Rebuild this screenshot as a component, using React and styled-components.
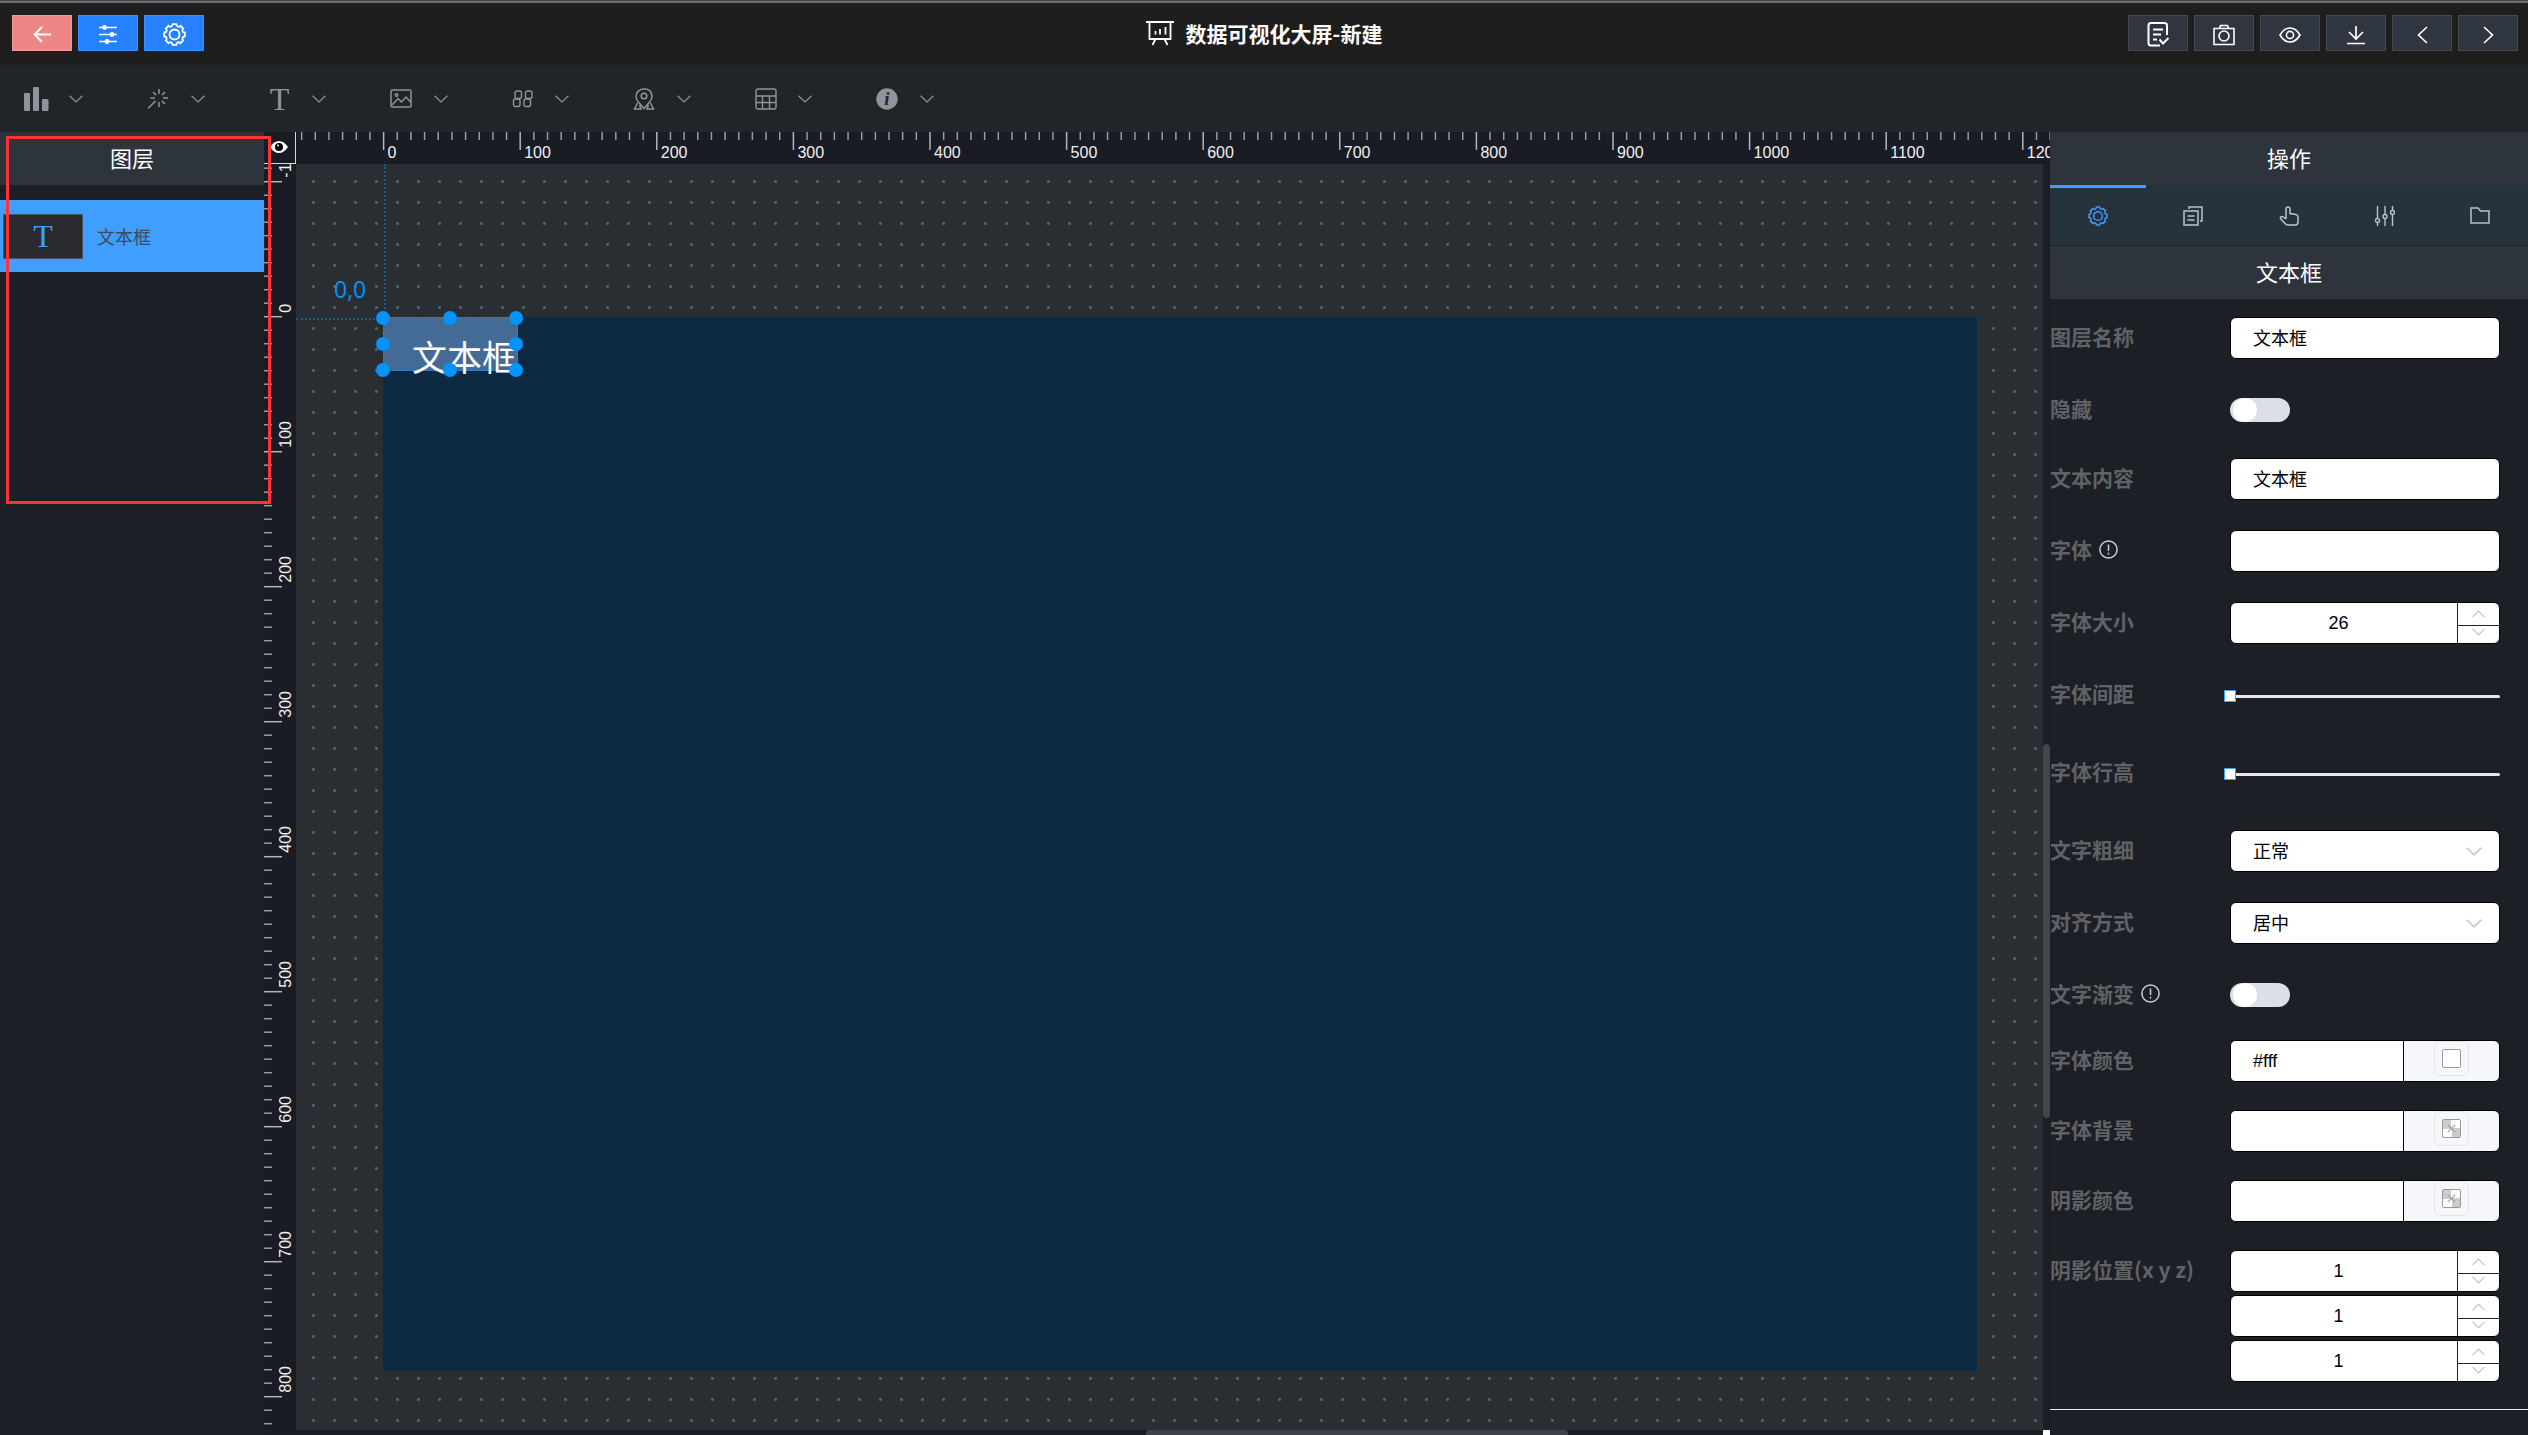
import React, { useState } from 'react';
import styled, { createGlobalStyle } from 'styled-components';

const GlobalStyle = createGlobalStyle`
  * {
    box-sizing: border-box;
  }

  body {
    margin: 0;
    background: #1e1e1f;
    color: #fff;
    font-family: 'Noto Sans CJK SC', sans-serif;
    font-size: 18px;
  }

  button, input, select {
    margin: 0;
    padding: 0;
    font: inherit;
  }
`;

const cjk = "'Noto Sans CJK SC', sans-serif";
const arial = "'Liberation Sans', 'Noto Sans CJK SC', sans-serif";

const Page = styled.div`
  display: flex;
  flex-direction: column;
  height: 100vh;
  border-top: 1px solid #48474a;
  overflow: hidden;
`;

const Header = styled.header`
  display: grid;
  grid-template-columns: 1fr auto 1fr;
  flex: none;
  height: 64px;
  padding: 12px 12px 0 12px;
  border-top: 2px solid #706e70;
  background: #1e1e1f;
`;

const HeaderGroup = styled.div`
  display: flex;
  gap: 6px;
  height: 36px;
  margin-right: ${props => props.$end ? '-2px' : '0'};
  justify-content: ${props => props.$end ? 'flex-end' : 'flex-start'};
`;

const HeaderButton = styled.button`
  display: flex;
  align-items: center;
  justify-content: center;
  width: 60px;
  height: 36px;
  padding-top: 3px;
  color: #fff;
  background: ${props => props.$bg || '#303640'};
  border: 1px solid ${props => props.$border || '#454850'};
  cursor: pointer;
`;

const PageTitle = styled.h1`
  display: flex;
  align-items: center;
  gap: 12px;
  height: 36px;
  margin: 0;
  font-size: 21px;
  font-weight: 700;
  line-height: 36px;
`;

const Toolbar = styled.nav`
  display: flex;
  flex: none;
  height: 67px;
  background: #222528;
`;

const ToolList = styled.div`
  display: grid;
  grid-template-columns: repeat(8, 1fr);
  width: 972px;
`;

const ToolButton = styled.button`
  display: flex;
  align-items: center;
  gap: 20px;
  padding: 0 0 0 24px;
  color: #909399;
  background: none;
  border: none;
  cursor: pointer;
`;

const ToolIcon = styled.span`
  display: flex;
  align-items: center;
  justify-content: center;
  width: 25px;
  height: 26px;
`;

const SerifT = styled.span`
  font-family: 'Liberation Serif', serif;
  font-size: 32px;
  line-height: 32px;
`;

const Body = styled.div`
  position: relative;
  display: flex;
  flex: 1;
  min-height: 0;
  background: #1d1f27;
`;

const LayerPanel = styled.aside`
  flex: none;
  width: 264px;
`;

const PanelTitle = styled.h2`
  flex: none;
  height: 53px;
  margin: 0;
  background: #2d343c;
  font-size: 22px;
  font-weight: 400;
  line-height: 50px;
  text-align: center;
`;

const LayerItem = styled.button`
  display: flex;
  align-items: center;
  gap: 14px;
  width: 100%;
  height: 72px;
  margin-top: 15px;
  padding: 0 3px;
  color: #3b4a5c;
  background: #409eff;
  border: none;
  font-size: 18px;
  cursor: pointer;
`;

const LayerThumb = styled.span`
  display: flex;
  align-items: center;
  justify-content: center;
  width: 80px;
  height: 45px;
  background: #282a30;
  border: 1px solid #46566a;
  color: #409eff;
`;

const Highlight = styled.div`
  position: absolute;
  z-index: 5;
  top: 4px;
  left: 6px;
  width: 265px;
  height: 368px;
  border: 3px solid #ff3334;
  pointer-events: none;
`;

const Workspace = styled.main`
  display: grid;
  grid-template-columns: 32px minmax(0, 1fr);
  grid-template-rows: 32px minmax(0, 1fr) 5px;
  flex: 1;
  min-width: 0;
  background: #191b25;
`;

const RulerCorner = styled.button`
  display: flex;
  align-items: center;
  justify-content: center;
  padding: 0 1px 2px 0;
  background: #191b25;
  border: none;
  border-right: 1px solid #d8d8d8;
  border-bottom: 1px solid #d8d8d8;
`;

const RulerBox = styled.div`
  overflow: hidden;
  background: #191b25;

  svg {
    display: block;
  }

  text {
    font-family: ${arial};
    font-size: 16px;
    fill: #f0f0f0;
  }
`;

const StageRow = styled.div`
  display: grid;
  grid-template-columns: minmax(0, 1fr) 7px;
  min-height: 0;
`;

const Stage = styled.div`
  position: relative;
  overflow: hidden;
  background-color: #2a2d31;
  background-image: radial-gradient(circle at 50% 50%, #596a6e 0, #4e5b5f 1px, #475256 1.5px, transparent 2px);
  background-size: 21px 21px;
  background-position: 7px 7px;
`;

const ScrollTrack = styled.div`
  background: #1c1e26;
`;

const ScrollThumbY = styled.div`
  height: 374px;
  margin-top: 580px;
  border-radius: 4px;
  background: #42454d;
`;

const BottomTrack = styled.div`
  display: flex;
  justify-content: space-between;
  grid-column: 1 / -1;
  padding-left: 882px;
  background: #1c1d25;
`;

const ScrollThumbX = styled.div`
  width: 422px;
  border-radius: 4px 4px 0 0;
  background: #40424b;
`;

const ScrollCorner = styled.div`
  width: 7px;
  background: #fff;
`;

const Artboard = styled.div`
  position: absolute;
  top: 153px;
  left: 87px;
  width: 1594px;
  height: 1054px;
  background: #0e2a42;
`;

const GuideX = styled.div`
  position: absolute;
  top: 154px;
  left: 0;
  width: 87px;
  border-top: 2px dotted #1d5a88;
`;

const GuideY = styled.div`
  position: absolute;
  top: 0;
  left: 88px;
  height: 153px;
  border-left: 2px dotted #1d5a88;
`;

const Coords = styled.div`
  position: absolute;
  top: 110px;
  left: 38px;
  color: #0094ff;
  font-family: 'Open Sans', sans-serif;
  font-size: 23px;
  line-height: 30px;
`;

const Selection = styled.div`
  position: absolute;
  top: 0;
  left: 0;
  width: 135px;
  height: 54px;
  padding-left: 28px;
  background: #436b96;
  border: 1px dashed #1a86dc;
  font-size: 35px;
  line-height: 76px;
  white-space: nowrap;
`;

const Handle = styled.i`
  position: absolute;
  top: ${props => props.$top};
  left: ${props => props.$left};
  width: 14px;
  height: 14px;
  margin: -7px 0 0 -8px;
  border-radius: 50%;
  background: #0094ff;
`;

const SidePanel = styled.aside`
  display: flex;
  flex-direction: column;
  flex: none;
  width: 478px;
  background: #1d1f27;
  overflow: hidden;
`;

const TabBar = styled.div`
  display: grid;
  grid-template-columns: repeat(5, 1fr);
  flex: none;
  height: 60px;
  margin-bottom: 1px;
  background: #27333c;
`;

const Tab = styled.button`
  display: flex;
  align-items: center;
  justify-content: center;
  padding-bottom: 2px;
  color: ${props => props.$active ? '#409eff' : '#b4c4d0'};
  background: none;
  border: none;
  border-top: 3px solid ${props => props.$active ? '#409eff' : 'transparent'};
  cursor: pointer;
`;

const Form = styled.form`
  display: flex;
  flex-direction: column;
  padding: 18px 28px 0 0;
`;

const rowHeights = { switch: 69, group: 66, slider: 78, color: 70 };

const Row = styled.div`
  display: grid;
  grid-template-columns: 180px minmax(0, 1fr);
  align-items: start;
  min-height: ${props => rowHeights[props.$kind] || 72}px;
`;

const Label = styled.label`
  display: flex;
  align-items: center;
  gap: 7px;
  height: 38px;
  color: #606266;
  font-size: 21px;
  font-weight: 700;
  line-height: 38px;
  white-space: nowrap;

  svg {
    color: #c2d3dd;
  }
`;

const TextInput = styled.input`
  width: 100%;
  height: 42px;
  padding: 0 22px 2px;
  color: #000;
  background: #fff;
  border: 1px solid #000;
  border-radius: 6px;
  font-family: ${arial};
  font-size: 18px;
`;

const NumberBox = styled.div`
  display: grid;
  grid-template-columns: minmax(0, 1fr) 42px;
  height: 42px;
  background: #fff;
  border: 1px solid #000;
  border-radius: 6px;
  overflow: hidden;
`;

const NumberInput = styled.input`
  width: 100%;
  padding: 0 26px 0 15px;
  color: #000;
  background: none;
  border: none;
  font-family: ${arial};
  font-size: 18px;
  text-align: center;
  appearance: textfield;

  &::-webkit-inner-spin-button {
    appearance: none;
    margin: 0;
  }
`;

const Steppers = styled.div`
  display: grid;
  grid-template-rows: 23px 17px;
  border-left: 1px solid #222;
`;

const Stepper = styled.button`
  display: flex;
  align-items: center;
  justify-content: center;
  color: #c0c8d0;
  background: none;
  border: none;
  cursor: pointer;

  &:first-child {
    border-bottom: 1px solid #222;
  }

  &:last-child {
    padding-bottom: 6px;
  }
`;

const NumberStack = styled.div`
  display: grid;
  gap: 3px;
`;

const Switch = styled.input`
  appearance: none;
  width: 60px;
  height: 24px;
  margin-top: 9px;
  border-radius: 12px;
  background: ${props => props.checked ? '#409eff' : '#dcdfe6'};
  cursor: pointer;

  &::before {
    content: '';
    display: block;
    width: 24px;
    height: 24px;
    margin-left: ${props => props.checked ? '33px' : '3px'};
    border-radius: 50%;
    background: #fff;
  }
`;

const Slider = styled.input`
  appearance: none;
  width: calc(100% + 6px);
  height: 12px;
  margin: 16px 0 0 -6px;
  background: none;

  &::-webkit-slider-runnable-track {
    height: 3px;
    background: #e4e7ed;
    border-radius: 2px;
  }

  &::-webkit-slider-thumb {
    appearance: none;
    width: 12px;
    height: 12px;
    margin-top: -5px;
    background: #fff;
    border: 1px solid #409eff;
  }
`;

const SelectBox = styled.div`
  display: grid;
  align-items: center;
  color: #c0c4cc;

  > * {
    grid-area: 1 / 1;
  }

  svg {
    justify-self: end;
    margin-right: 18px;
    pointer-events: none;
  }
`;

const Select = styled.select`
  appearance: none;
  width: 100%;
  height: 42px;
  padding: 0 22px 2px;
  color: #000;
  background: #fff;
  border: 1px solid #000;
  border-radius: 6px;
  font-family: ${cjk};
  font-size: 18px;
`;

const ColorBox = styled.div`
  display: grid;
  grid-template-columns: minmax(0, 1fr) 95px;
  height: 42px;
  background: #f5f7fa;
  border: 1px solid #000;
  border-radius: 6px;
  overflow: hidden;
`;

const ColorInput = styled.input`
  width: 100%;
  padding: 0 22px;
  color: #000;
  background: #fff;
  border: none;
  border-right: 1px solid #000;
  font-family: ${arial};
  font-size: 18px;
`;

const SwatchButton = styled.button`
  display: flex;
  align-items: center;
  justify-content: center;
  justify-self: center;
  width: 35px;
  height: 35px;
  background: none;
  border: 1px solid #e6e6e6;
  border-radius: 6px;
  cursor: pointer;
`;

const Swatch = styled.span`
  display: flex;
  align-items: center;
  justify-content: center;
  width: 19px;
  height: 19px;
  color: #999;
  border: 1px solid #999;
  border-radius: 2px;
  background: ${props => props.$empty
    ? 'conic-gradient(#fff 25%, #ccc 0 50%, #fff 0 75%, #ccc 0)'
    : '#fff'};
`;

const Divider = styled.hr`
  width: 100%;
  flex: none;
  margin: 27px 0 0;
  border: none;
  border-top: 1px solid #e8eaef;
`;

const Svg = ({ size = 22, width, height, box = '0 0 24 24', stroke = 1.8, children }) => (
  <svg
    width={width || size}
    height={height || size}
    viewBox={box}
    fill="none"
    stroke="currentColor"
    strokeWidth={stroke}
    aria-hidden="true"
  >
    {children}
  </svg>
);

// eight rounded teeth round a centre of 12,12
const gearPath = (() => {
  const parts = [];
  const at = (angle, r) => {
    const a = (angle * Math.PI) / 180;
    return `${(12 + r * Math.cos(a)).toFixed(2)} ${(12 + r * Math.sin(a)).toFixed(2)}`;
  };
  for (let i = 0; i < 8; i++) {
    const a = i * 45;
    parts.push(`${i ? 'L' : 'M'}${at(a - 11, 11)}L${at(a + 11, 11)}`);
    parts.push(`Q${at(a + 13, 9)} ${at(a + 22.5, 9)}Q${at(a + 32, 9)} ${at(a + 34, 11)}`);
  }
  return parts.join('') + 'Z';
})();

const GearIcon = ({ size, stroke }) => (
  <Svg size={size} stroke={stroke}>
    <path d={gearPath} strokeLinejoin="round" />
    <circle cx="12" cy="12" r="5.2" />
  </Svg>
);

const BackIcon = () => (
  <Svg width={18} height={17} box="0 0 18 17" stroke={1.8}>
    <path d="M18 8.5H1.5M9 1L1.5 8.5L9 16" />
  </Svg>
);

const OperationIcon = () => (
  <Svg width={20} height={19} box="0 0 20 19" stroke={1.6}>
    <path d="M1 2.5H19M1 9.5H19M1 16.5H19" />
    <g fill="currentColor" stroke="none">
      <circle cx="6.5" cy="2.5" r="2.4" />
      <circle cx="14" cy="9.5" r="2.4" />
      <circle cx="9" cy="16.5" r="2.4" />
    </g>
  </Svg>
);

const BoardIcon = () => (
  <Svg width={28} height={26} box="0 0 28 26" stroke={1.8}>
    <path d="M0 2H28M3.5 2V19H24.5V2M9.5 19L6.500 25M18.5 19L21.5 25M9.5 11V14.5M14 9V14.5M19.5 7V14.5" />
  </Svg>
);

const SaveIcon = () => (
  <Svg width={23} height={25} box="0 0 23 25" stroke={2}>
    <path d="M13 23.500H4Q1.500 23.500 1.500 21V3.500Q1.500 1 4 1H17.500Q20 1 20 3.500V13M6 7.500H16M6 12.500H14M6 17.500H10M12.500 17.500L16 21.500L21.500 16" />
  </Svg>
);

const CameraIcon = () => (
  <Svg width={22} height={22} box="0 0 22 22" stroke={1.6}>
    <path d="M1 4.5H21V20.5H1ZM6.5 4.5L7.5 1.5H14.5L15.5 4.5" />
    <circle cx="11" cy="12" r="5" />
  </Svg>
);

const EyeIcon = () => (
  <Svg width={22} height={18} box="0 0 22 18" stroke={1.6}>
    <path d="M1 9Q5 2 11 2T21 9Q17 16 11 16T1 9Z" />
    <circle cx="11" cy="9" r="3.6" />
  </Svg>
);

const DownloadIcon = () => (
  <Svg width={18} height={20} box="0 0 18 20" stroke={1.7}>
    <path d="M9 1V13.5M2 7L9 14L16 7M0 18.5H18" />
  </Svg>
);

const PrevIcon = () => (
  <Svg width={11} height={18} box="0 0 11 18" stroke={1.6}>
    <path d="M10 1L1.5 9L10 17" />
  </Svg>
);

const NextIcon = () => (
  <Svg width={11} height={18} box="0 0 11 18" stroke={1.6}>
    <path d="M1 1L9.5 9L1 17" />
  </Svg>
);

const ChevronDown = ({ width = 14, height = 8, stroke = 1.2 }) => (
  <Svg width={width} height={height} box="0 0 14 8" stroke={stroke}>
    <path d="M0.5 0.7L7 7L13.5 0.7" />
  </Svg>
);

const ChevronUp = () => (
  <Svg width={13} height={8} box="0 0 14 8" stroke={1.3}>
    <path d="M0.5 7.3L7 1L13.5 7.3" />
  </Svg>
);

const ChartIcon = () => (
  <Svg width={25} height={24} box="0 0 25 24">
    <g fill="currentColor" stroke="none">
      <rect x="0" y="6" width="6" height="18" rx="1" />
      <rect x="9" y="0" width="6" height="24" rx="1" />
      <rect x="18" y="12" width="6.5" height="12" rx="1" />
    </g>
  </Svg>
);

const WandIcon = () => (
  <Svg width={22} height={22} box="0 0 22 22" stroke={1.5}>
    <path d="M1 20.5L8.5 13M12 1V6M12 14V19M3.5 10H8M16 10H21M6 4L9 7M18 4L15 7M15 13L18 16" />
  </Svg>
);

const ImageIcon = () => (
  <Svg width={22} height={19} box="0 0 22 19" stroke={1.5}>
    <rect x="1" y="1" width="20" height="17" rx="1.5" />
    <path d="M2 16L8 9.5L11.5 13L16 8L20.5 13" />
    <circle cx="6.5" cy="6" r="1.3" />
  </Svg>
);

// two slanted seven-segment digits
const DigitsIcon = () => (
  <Svg width={22} height={18} box="0 0 22 18" stroke={1.4}>
    <g strokeLinejoin="round">
      <rect x="3" y="1" width="6.5" height="7.5" rx="2" />
      <rect x="1.500" y="9" width="6.500" height="7.500" rx="2" />
      <rect x="13.500" y="1" width="6.500" height="7.500" rx="2" />
      <rect x="12" y="9" width="6.500" height="7.500" rx="2" />
    </g>
  </Svg>
);

const MapIcon = () => (
  <Svg width={22} height={22} box="0 0 22 22" stroke={1.5}>
    <path d="M11 20.5L5 13.5Q3 11 3 8.5Q3.5 1.5 11 1T19 8.5Q19 11 17 13.5ZM4.5 15L1.5 21H8L6.5 17M17.5 15L20.5 21H14L15.5 17" />
    <circle cx="11" cy="8" r="2.8" />
  </Svg>
);

const TableIcon = () => (
  <Svg width={22} height={22} box="0 0 22 22" stroke={1.4}>
    <rect x="1" y="1" width="20" height="20" rx="2" />
    <path d="M1 8H21M1 14.5H21M7.5 8V21M14.5 8V21" />
  </Svg>
);

const InfoIcon = () => (
  <svg width="22" height="22" viewBox="0 0 22 22" aria-hidden="true">
    <circle cx="11" cy="11" r="10.7" fill="#909399" />
    <text x="11" y="17" textAnchor="middle" fill="#222528" fontFamily="Liberation Serif, serif" fontStyle="italic" fontWeight="700" fontSize="19">i</text>
  </svg>
);

const CornerEye = () => (
  <svg width="18" height="14" viewBox="0 0 18 14" aria-hidden="true">
    <path d="M0 7Q4 1 9 1T18 7Q14 13 9 13T0 7Z" fill="#fff" />
    <circle cx="9" cy="7" r="4" fill="#000" />
    <circle cx="8" cy="5.5" r="1" fill="#fff" />
  </svg>
);

const CopyIcon = () => (
  <Svg width={20} height={20} box="0 0 20 20" stroke={1.5}>
    <path d="M1 5H15V19H1ZM6 3V1H19V15H17M4.5 10H11.5M4.5 14H11.5" />
  </Svg>
);

const PointerIcon = () => (
  <Svg width={20} height={20} box="0 0 20 20" stroke={1.5}>
    <path d="M7 13V3Q7.2 1 9 1T11 3V7.5L17 8.5Q19 9 19 11V16Q19 19 16 19H9Q7 19 5.5 17L1.5 12.5Q1 11 2.500 10.5Q4 10.2 7 13" />
  </Svg>
);

const FaderIcon = () => (
  <Svg width={20} height={20} box="0 0 20 20" stroke={1.4}>
    <path d="M2.5 0V12M2.5 17V20M10 0V8M10 13V20M17.5 0V4M17.5 9V20" />
    <circle cx="2.5" cy="14.5" r="2" />
    <circle cx="10" cy="10.5" r="2" />
    <circle cx="17.5" cy="6.5" r="2" />
  </Svg>
);

const FolderIcon = () => (
  <Svg width={20} height={17} box="0 0 20 17" stroke={1.5}>
    <path d="M1 1H8L10.5 4H19V16H1Z" />
  </Svg>
);

const TipIcon = () => (
  <Svg width={19} height={19} box="0 0 19 19" stroke={1.5}>
    <circle cx="9.5" cy="9.5" r="8.6" />
    <path d="M9.5 4.5V11M9.5 12.8V14.5" />
  </Svg>
);

const CrossIcon = () => (
  <Svg width={9} height={9} box="0 0 11 11" stroke={1.3}>
    <path d="M1 1L10 10M10 1L1 10" />
  </Svg>
);

const tools = [
  { name: '图表', icon: <ChartIcon /> },
  { name: '特效', icon: <WandIcon /> },
  { name: '文字', icon: <SerifT>T</SerifT> },
  { name: '图片', icon: <ImageIcon /> },
  { name: '指标', icon: <DigitsIcon /> },
  { name: '地图', icon: <MapIcon /> },
  { name: '表格', icon: <TableIcon /> },
  { name: '信息', icon: <InfoIcon /> },
];

const actions = [
  { name: '保存', icon: <SaveIcon /> },
  { name: '截图', icon: <CameraIcon /> },
  { name: '预览', icon: <EyeIcon /> },
  { name: '下载', icon: <DownloadIcon /> },
  { name: '撤销', icon: <PrevIcon /> },
  { name: '重做', icon: <NextIcon /> },
];

const tabs = [
  { name: '配置', icon: <GearIcon size={20} stroke={1.7} /> },
  { name: '数据', icon: <CopyIcon /> },
  { name: '交互', icon: <PointerIcon /> },
  { name: '参数', icon: <FaderIcon /> },
  { name: '分组', icon: <FolderIcon /> },
];

const handles = [
  ['0%', '0%'], ['0%', '50%'], ['0%', '100%'],
  ['50%', '0%'], ['50%', '100%'],
  ['100%', '0%'], ['100%', '50%'], ['100%', '100%'],
];

// origin: pixel of the zero mark, step: pixels per 100 units
function Ruler({ vertical, origin, step, from, to }) {
  const marks = [];
  for (let i = from; i <= to; i++) {
    const major = i % 10 === 0;
    const pos = origin + (i * step) / 10;
    const len = major ? 18 : 8;
    marks.push(
      <g key={i}>
        <line
          x1={vertical ? 0 : pos}
          x2={vertical ? len : pos}
          y1={vertical ? pos : 0}
          y2={vertical ? pos : len}
          stroke={major ? '#b4b5b8' : '#9a9b9e'}
          strokeWidth="1.5"
        />
        {major && (
          vertical
            ? <text transform={`translate(27 ${pos - 4}) rotate(-90)`}>{i * 10}</text>
            : <text x={pos + 4} y="26">{i * 10}</text>
        )}
      </g>
    );
  }
  return (
    <RulerBox>
      <svg width="100%" height="100%">{marks}</svg>
    </RulerBox>
  );
}

function NumberField({ id, value, onChange, label }) {
  return (
    <NumberBox>
      <NumberInput
        id={id}
        type="number"
        aria-label={label}
        value={value}
        onChange={e => onChange(Number(e.target.value))}
      />
      <Steppers>
        <Stepper type="button" aria-label="增加" onClick={() => onChange(value + 1)}>
          <ChevronUp />
        </Stepper>
        <Stepper type="button" aria-label="减少" onClick={() => onChange(value - 1)}>
          <ChevronDown width={13} height={8} stroke={1.3} />
        </Stepper>
      </Steppers>
    </NumberBox>
  );
}

function ColorField({ id, value, onChange }) {
  return (
    <ColorBox>
      <ColorInput id={id} value={value} onChange={e => onChange(e.target.value)} />
      <SwatchButton type="button" aria-label="选择颜色">
        <Swatch $empty={!value}>{!value && <CrossIcon />}</Swatch>
      </SwatchButton>
    </ColorBox>
  );
}

function SelectField({ id, value, options, onChange }) {
  return (
    <SelectBox>
      <Select id={id} value={value} onChange={e => onChange(e.target.value)}>
        {options.map(item => <option key={item}>{item}</option>)}
      </Select>
      <ChevronDown width={16} height={9} stroke={1.3} />
    </SelectBox>
  );
}

export default function App() {
  const [activeTab, setActiveTab] = useState(0);
  const [form, setForm] = useState({
    name: '文本框',
    hidden: false,
    text: '文本框',
    family: '',
    size: 26,
    spacing: 0,
    lineHeight: 0,
    weight: '正常',
    align: '居中',
    gradient: false,
    color: '#fff',
    background: '',
    shadow: '',
    x: 1,
    y: 1,
    z: 1,
  });

  const set = key => value => setForm(prev => ({ ...prev, [key]: value }));

  return (
    <Page>
      <GlobalStyle />
      <Header>
        <HeaderGroup>
          <HeaderButton $bg="#ed8787" $border="#f29a9a" aria-label="返回"><BackIcon /></HeaderButton>
          <HeaderButton $bg="#2681ff" $border="#3f90ff" aria-label="图层"><OperationIcon /></HeaderButton>
          <HeaderButton $bg="#2681ff" $border="#3f90ff" aria-label="设置"><GearIcon size={23} stroke={1.9} /></HeaderButton>
        </HeaderGroup>
        <PageTitle>
          <BoardIcon />
          数据可视化大屏-新建
        </PageTitle>
        <HeaderGroup $end>
          {actions.map(item => (
            <HeaderButton key={item.name} aria-label={item.name}>{item.icon}</HeaderButton>
          ))}
        </HeaderGroup>
      </Header>

      <Toolbar>
        <ToolList>
          {tools.map(item => (
            <ToolButton key={item.name} aria-label={item.name}>
              <ToolIcon>{item.icon}</ToolIcon>
              <ChevronDown />
            </ToolButton>
          ))}
        </ToolList>
      </Toolbar>

      <Body>
        <LayerPanel>
          <PanelTitle>图层</PanelTitle>
          <LayerItem>
            <LayerThumb><SerifT>T</SerifT></LayerThumb>
            {form.name}
          </LayerItem>
        </LayerPanel>

        <Workspace>
          <RulerCorner aria-label="显示参考线"><CornerEye /></RulerCorner>
          <Ruler origin={87.6} step={136.6} from={-6} to={124} />
          <Ruler vertical origin={152.7} step={135} from={-11} to={84} />
          <StageRow>
            <Stage>
              <GuideX />
              <GuideY />
              <Coords>0,0</Coords>
              <Artboard>
                <Selection>
                  {form.text}
                  {handles.map(([top, left]) => (
                    <Handle key={top + left} $top={top} $left={left} />
                  ))}
                </Selection>
              </Artboard>
            </Stage>
            <ScrollTrack>
              <ScrollThumbY />
            </ScrollTrack>
          </StageRow>
          <BottomTrack>
            <ScrollThumbX />
            <ScrollCorner />
          </BottomTrack>
        </Workspace>

        <SidePanel>
          <PanelTitle>操作</PanelTitle>
          <TabBar>
            {tabs.map((tab, index) => (
              <Tab
                key={tab.name}
                aria-label={tab.name}
                $active={index === activeTab}
                onClick={() => setActiveTab(index)}
              >
                {tab.icon}
              </Tab>
            ))}
          </TabBar>
          <PanelTitle>文本框</PanelTitle>
          <Form>
            <Row>
              <Label htmlFor="name">图层名称</Label>
              <TextInput id="name" value={form.name} onChange={e => set('name')(e.target.value)} />
            </Row>
            <Row $kind="switch">
              <Label htmlFor="hidden">隐藏</Label>
              <Switch id="hidden" type="checkbox" checked={form.hidden} onChange={e => set('hidden')(e.target.checked)} />
            </Row>
            <Row>
              <Label htmlFor="text">文本内容</Label>
              <TextInput id="text" value={form.text} onChange={e => set('text')(e.target.value)} />
            </Row>
            <Row>
              <Label htmlFor="family">字体<TipIcon /></Label>
              <TextInput id="family" value={form.family} onChange={e => set('family')(e.target.value)} />
            </Row>
            <Row>
              <Label htmlFor="size">字体大小</Label>
              <NumberField id="size" value={form.size} onChange={set('size')} />
            </Row>
            <Row $kind="slider">
              <Label htmlFor="spacing">字体间距</Label>
              <Slider id="spacing" type="range" value={form.spacing} onChange={e => set('spacing')(e.target.value)} />
            </Row>
            <Row $kind="slider">
              <Label htmlFor="lineHeight">字体行高</Label>
              <Slider id="lineHeight" type="range" value={form.lineHeight} onChange={e => set('lineHeight')(e.target.value)} />
            </Row>
            <Row>
              <Label htmlFor="weight">文字粗细</Label>
              <SelectField id="weight" value={form.weight} options={['正常', '粗体']} onChange={set('weight')} />
            </Row>
            <Row>
              <Label htmlFor="align">对齐方式</Label>
              <SelectField id="align" value={form.align} options={['居中', '左对齐', '右对齐']} onChange={set('align')} />
            </Row>
            <Row $kind="group">
              <Label htmlFor="gradient">文字渐变<TipIcon /></Label>
              <Switch id="gradient" type="checkbox" checked={form.gradient} onChange={e => set('gradient')(e.target.checked)} />
            </Row>
            <Row $kind="color">
              <Label htmlFor="color">字体颜色</Label>
              <ColorField id="color" value={form.color} onChange={set('color')} />
            </Row>
            <Row $kind="color">
              <Label htmlFor="background">字体背景</Label>
              <ColorField id="background" value={form.background} onChange={set('background')} />
            </Row>
            <Row $kind="color">
              <Label htmlFor="shadow">阴影颜色</Label>
              <ColorField id="shadow" value={form.shadow} onChange={set('shadow')} />
            </Row>
            <Row>
              <Label htmlFor="x">阴影位置(x y z)</Label>
              <NumberStack>
                <NumberField id="x" value={form.x} onChange={set('x')} />
                <NumberField label="y" value={form.y} onChange={set('y')} />
                <NumberField label="z" value={form.z} onChange={set('z')} />
              </NumberStack>
            </Row>
          </Form>
          <Divider />
        </SidePanel>

        <Highlight />
      </Body>
    </Page>
  );
}
